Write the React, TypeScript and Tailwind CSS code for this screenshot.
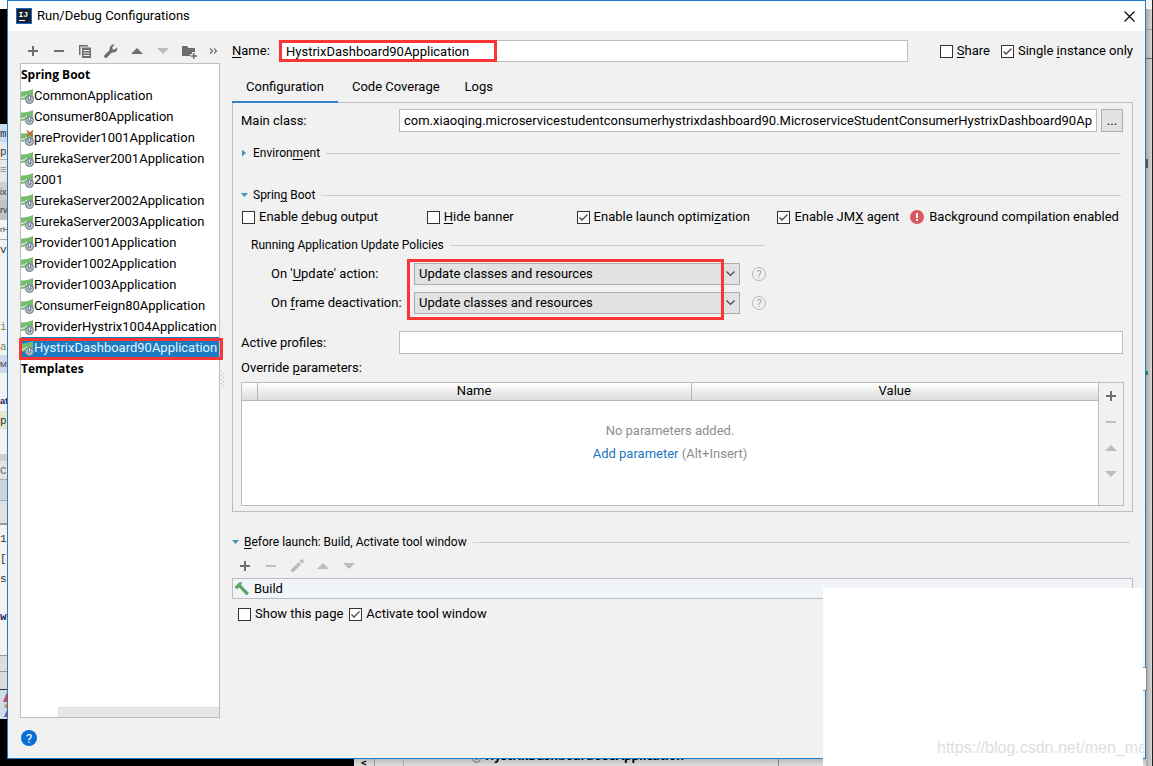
import React from "react";
import clsx from "clsx";

const apps = [
  { name: "CommonApplication" },
  { name: "Consumer80Application" },
  { name: "preProvider1001Application", broken: true },
  { name: "EurekaServer2001Application" },
  { name: "2001" },
  { name: "EurekaServer2002Application" },
  { name: "EurekaServer2003Application" },
  { name: "Provider1001Application" },
  { name: "Provider1002Application" },
  { name: "Provider1003Application" },
  { name: "ConsumerFeign80Application" },
  { name: "ProviderHystrix1004Application" },
  { name: "HystrixDashboard90Application", selected: true },
];

const policies = [
  { id: "on-update", label: "On '_Update' action:" },
  { id: "on-frame", label: "On _frame deactivation:" },
];

// "_" marks the mnemonic: the letter after it is underlined
function Mnemonic({ text }: { text: string }) {
  const at = text.indexOf("_");
  if (at < 0) return <>{text}</>;
  return (
    <>
      {text.slice(0, at)}
      <span className="underline underline-offset-2">{text[at + 1]}</span>
      {text.slice(at + 2)}
    </>
  );
}

type IconName = "plus" | "minus" | "copy" | "wrench" | "up" | "down" | "folder" | "more" | "pencil";

function Glyph({ name }: { name: IconName }) {
  return (
    <svg viewBox="0 0 16 16" className="size-4" fill="currentColor" aria-hidden="true">
      {name === "plus" && <path d="M7 3h2v4h4v2H9v4H7V9H3V7h4z" />}
      {name === "minus" && <path d="M3 7h10v2H3z" />}
      {name === "copy" && (
        <path fillRule="evenodd" d="M2 2h9v1.500H3.500V12H2zM5 4.500h9V15H5zM6.500 7v1h6V7zm0 2.500v1h6v-1zm0 2.500v1h6v-1z" />
      )}
      {name === "wrench" && (
        <path d="M14.300 4.300 11.800 6.600 9.700 6.200 9.300 4.200 11.600 1.800A4 4 0 0 0 6.700 7L1.600 12a1.600 1.600 0 0 0 2.400 2.400L9.100 9.300A4 4 0 0 0 14.300 4.300z" />
      )}
      {name === "up" && <path d="M2 11 8 5l6 6z" />}
      {name === "down" && <path d="M2 5h12L8 11z" />}
      {name === "folder" && (
        <path d="M1 3h5l1.500 2H14v4h-3v2H9v2H1zM12 10h1.500v2.200H16v1.500h-2.500V16H12v-2.300H9.700v-1.500H12z" />
      )}
      {name === "more" && (
        <path d="m3 5.500 2.500 2.500L3 10.500M7 5.500l2.500 2.500L7 10.500" fill="none" stroke="currentColor" strokeWidth="1.200" />
      )}
      {name === "pencil" && (
        <path d="m2 11.500 7.500-7.500 2.600 2.600L4.600 14H2zM10.500 3l1.600-1.600a1 1 0 0 1 1.300 0l1.300 1.300a1 1 0 0 1 0 1.300L13.100 5.600z" />
      )}
    </svg>
  );
}

function IconButton({ name, label, disabled }: { name: IconName; label: string; disabled?: boolean }) {
  return (
    <button
      type="button"
      aria-label={label}
      disabled={disabled}
      className={clsx(
        "flex h-5 w-[26px] shrink-0 items-center justify-center",
        disabled ? "text-[#bcbcbc]" : "text-[#6e6e6e]"
      )}
    >
      <Glyph name={name} />
    </button>
  );
}

function Check({ text, checked }: { text: string; checked?: boolean }) {
  return (
    <label className="flex items-center gap-1 whitespace-nowrap">
      <span className="grid place-items-center">
        <input
          type="checkbox"
          defaultChecked={checked}
          className="peer col-start-1 row-start-1 size-[13px] appearance-none border border-[#333] bg-white"
        />
        <svg
          viewBox="0 0 13 13"
          className="pointer-events-none invisible col-start-1 row-start-1 size-[13px] peer-checked:visible"
          aria-hidden="true"
        >
          <path d="M2.500 6.500 5 9l5.500-5.500" fill="none" stroke="#444" strokeWidth="1.300" />
        </svg>
      </span>
      <span>
        <Mnemonic text={text} />
      </span>
    </label>
  );
}

function Section({ text, open, plain }: { text: string; open?: boolean; plain?: boolean }) {
  return (
    <div className="flex h-5 items-center text-xs">
      {!plain && (
        <svg viewBox="0 0 8 8" className="mr-1 size-2" fill="#4393bf" aria-hidden="true">
          {open ? <path d="M0 2h7L3.500 6z" /> : <path d="M1 0.500 5 4 1 7.500z" />}
        </svg>
      )}
      <span className="whitespace-nowrap">
        <Mnemonic text={text} />
      </span>
      <span className="ml-1.5 h-px flex-1 bg-[#cdcdcd]" />
    </div>
  );
}

function SpringIcon({ broken }: { broken?: boolean }) {
  return (
    <svg viewBox="0 0 13 18" className="h-[18px] w-[13px] shrink-0" aria-hidden="true">
      <path d="M0 4.500C4 4.500 8 4 12 2v8L6 12 0 13z" fill="#74bd6c" />
      <path d="M0 10.500Q4 10.500 6 8" fill="none" stroke="#fff" strokeWidth="1" />
      <circle cx="8.500" cy="12.500" r="4.500" fill="#7f8e9b" />
      <path d="M6.700 10.700a2.600 2.600 0 1 0 3.600 0M8.500 9.500v3" fill="none" stroke="#dfe5ea" strokeWidth="1" />
      {broken && <path d="m6 1.500 6 6m0-6-6 6" stroke="#d9583f" strokeWidth="1.500" />}
    </svg>
  );
}

function GroupTitle({ text }: { text: string }) {
  return <div className="h-[21px] font-['Open_Sans',sans-serif] text-xs leading-[21px] font-bold">{text}</div>;
}

function Sidebar() {
  return (
    <aside className="flex w-[200px] shrink-0 flex-col">
      <div className="flex h-[23px] items-center pb-px">
        <IconButton name="plus" label="Add" />
        <IconButton name="minus" label="Remove" />
        <IconButton name="copy" label="Copy" />
        <IconButton name="wrench" label="Edit defaults" />
        <IconButton name="up" label="Move up" />
        <IconButton name="down" label="Move down" disabled />
        <IconButton name="folder" label="New folder" />
        <IconButton name="more" label="More" />
      </div>
      <div className="flex flex-1 flex-col border border-[#bdbdbd] bg-white">
        <GroupTitle text="Spring Boot" />
        <ul>
          {apps.map((app) => (
            <li
              key={app.name}
              className={clsx(
                "relative flex h-[21px] items-center whitespace-nowrap",
                app.selected && "bg-[#1a7dc4] text-[#e6f1fa]"
              )}
            >
              <SpringIcon broken={app.broken} />
              {app.name}
              {app.selected && <span className="absolute top-px -right-1 -bottom-0.5 -left-0.5 border-3 border-[#fb3535]" />}
            </li>
          ))}
        </ul>
        <GroupTitle text="Templates" />
        <div className="mt-auto ml-[37px] h-2.5 border border-b-0 border-[#dedede] bg-[#e7e7e7]" />
      </div>
    </aside>
  );
}

function Policies() {
  return (
    <div className="relative mt-2 flex flex-col gap-[7px] pl-[30px]">
      {policies.map((p) => (
        <div key={p.id} className="flex h-[22px] items-center">
          <label htmlFor={p.id} className="w-[143px] shrink-0 whitespace-nowrap">
            <Mnemonic text={p.label} />
          </label>
          <div className="grid h-full w-[326px] items-center">
            <select
              id={p.id}
              className="col-start-1 row-start-1 h-[22px] w-full appearance-none border border-[#adadad] bg-[#e2e2e2] pl-1 leading-5"
            >
              <option>Update classes and resources</option>
            </select>
            <svg viewBox="0 0 9 6" className="pointer-events-none col-start-1 row-start-1 mr-[5px] h-1.5 w-[9px] justify-self-end" aria-hidden="true">
              <path d="m0.500 0.500 4 4 4-4" fill="none" stroke="#444" strokeWidth="1.200" />
            </svg>
          </div>
          <button
            type="button"
            aria-label="Help"
            className="ml-3 flex size-3.5 items-center justify-center rounded-full border border-[#b5babd] text-[11px] leading-none text-[#a0a5a8]"
          >
            ?
          </button>
        </div>
      ))}
      <span className="pointer-events-none absolute -top-1 -bottom-1.5 left-[166px] w-[317px] border-3 border-[#fb3535]" />
    </div>
  );
}

function ParametersTable() {
  return (
    <div className="mt-1 -mr-px flex h-[124px] border border-[#bdbdbd]">
      <table className="h-full flex-1 table-fixed border-collapse bg-white">
        <thead>
          <tr className="h-[17px] bg-linear-to-b from-white to-[#dcdcdc] leading-4">
            <th className="w-[15px] border-r border-b border-[#b5b5b5] p-0" aria-label="Row" />
            <th className="w-[434px] border-r border-b border-[#b5b5b5] p-0 font-normal">Name</th>
            <th className="border-b border-[#b5b5b5] p-0 font-normal">Value</th>
          </tr>
        </thead>
        <tbody>
          <tr>
            <td colSpan={3} className="p-0 pt-[18px] text-center align-top leading-[23px] text-[#8e8e8e]">
              <p>No parameters added.</p>
              <p>
                <a href="#add" className="text-[#1a76c4]">
                  Add parameter
                </a>{" "}
                (Alt+Insert)
              </p>
            </td>
          </tr>
        </tbody>
      </table>
      <div className="flex w-[25px] flex-col items-center gap-1.5 border-l border-[#bdbdbd] pt-[3px]">
        <IconButton name="plus" label="Add parameter" />
        <IconButton name="minus" label="Remove parameter" disabled />
        <IconButton name="up" label="Move parameter up" disabled />
        <IconButton name="down" label="Move parameter down" disabled />
      </div>
    </div>
  );
}

function ConfigurationPanel() {
  return (
    <div className="border border-[#bdbdbd] pt-1.5 pr-[9px] pb-[5px] pl-2">
      <div className="flex h-[23px] items-center">
        <label htmlFor="main-class" className="w-[158px] shrink-0">
          Main class:
        </label>
        <input
          id="main-class"
          defaultValue="com.xiaoqing.microservicestudentconsumerhystrixdashboard90.MicroserviceStudentConsumerHystrixDashboard90Application"
          className="h-full min-w-0 flex-1 border border-[#bdbdbd] bg-white px-1"
        />
        <button type="button" aria-label="Browse" className="ml-1 h-full w-[22px] border border-[#adadad] bg-[#e2e2e2] leading-none">
          ...
        </button>
      </div>
      <div className="mt-[11px] pr-0.5">
        <Section text="Environ_ment" />
      </div>
      <div className="mt-[22px] pr-0.5">
        <Section text="Sprin_g Boot" open />
      </div>
      <div className="mt-0.5 grid h-5 grid-cols-[185fr_150fr_201fr_133fr_213fr] items-center pl-px">
        <Check text="Enable _debug output" />
        <Check text="_Hide banner" />
        <Check text="Enable launch optimi_zation" checked />
        <Check text="Enable JM_X agent" checked />
        <span className="flex items-center gap-[5px] whitespace-nowrap">
          <svg viewBox="0 0 14 14" className="size-3.5" aria-hidden="true">
            <circle cx="7" cy="7" r="7" fill="#db5860" />
            <path d="M6 3h2v5H6zM6 9h2v2H6z" fill="#fff" />
          </svg>
          Background compilation enabled
        </span>
      </div>
      <div className="mt-2 w-[524px] pl-2.5">
        <Section text="Running Application Update Policies" plain />
      </div>
      <Policies />
      <div className="mt-[17px] flex h-[23px] items-center">
        <label htmlFor="profiles" className="w-[158px] shrink-0">
          Active profiles:
        </label>
        <input id="profiles" className="h-full min-w-0 flex-1 border border-[#bdbdbd] bg-white px-1" />
      </div>
      <div className="mt-1 h-5 leading-5">
        <Mnemonic text="Override _parameters:" />
      </div>
      <ParametersTable />
    </div>
  );
}

function Editor() {
  return (
    <main className="flex min-w-0 flex-1 flex-col">
      <div className="flex h-[22px] items-center">
        <label htmlFor="name" className="w-12 shrink-0">
          <Mnemonic text="_Name:" />
        </label>
        <div className="relative h-full flex-1">
          <input
            id="name"
            defaultValue="HystrixDashboard90Application"
            className="h-full w-full border border-[#bdbdbd] bg-white px-[5px]"
          />
          <span className="pointer-events-none absolute inset-y-0 -left-px w-[218px] border-3 border-[#fb3535]" />
        </div>
        <div className="ml-8 flex gap-[11px]">
          <Check text="_Share" />
          <Check text="Single _instance only" checked />
        </div>
      </div>
      <div role="tablist" className="z-10 mt-[9px] -mb-px flex h-8">
        <button type="button" role="tab" aria-selected="true" className="border-b-2 border-[#3880c8] px-3.5 pt-0.5">
          Configuration
        </button>
        <button type="button" role="tab" aria-selected="false" className="px-3.5">
          Code Coverage
        </button>
        <button type="button" role="tab" aria-selected="false" className="px-[11px]">
          Logs
        </button>
      </div>
      <ConfigurationPanel />
      <div className="mt-5 pr-[3px]">
        <Section text="_Before launch: Build, Activate tool window" open />
      </div>
      <div className="mt-1 flex">
        <IconButton name="plus" label="Add task" />
        <IconButton name="minus" label="Remove task" disabled />
        <IconButton name="pencil" label="Edit task" disabled />
        <IconButton name="up" label="Move task up" disabled />
        <IconButton name="down" label="Move task down" disabled />
      </div>
      <div className="mt-0.5 flex h-[21px] items-center gap-1 border border-[#bdbdbd] bg-[#f1f5fa] pl-px">
        <svg viewBox="0 0 16 16" className="size-4" fill="#59a869" aria-hidden="true">
          <path d="M0.500 6 5 1.500 8.500 1 7 3.500l1.500 2 6.500 6.500-2.500 2.500L6.500 8 5 6.500 3 8.500z" />
        </svg>
        Build
      </div>
      <div className="mt-[5px] flex h-5 items-center gap-1.5 pl-1.5">
        <Check text="Show this page" />
        <Check text="Activate tool window" checked />
      </div>
    </main>
  );
}

// slivers of the IDE windows that stay visible around the dialog
function LeftEdge() {
  return (
    <div className="flex w-[7px] shrink-0 flex-col overflow-hidden bg-black font-['Liberation_Mono',monospace] text-[11px] leading-5 text-[#333]">
      <div className="h-[9px] bg-white" />
      <div className="mt-[115px] h-[18px] bg-[#c9dcee]">m</div>
      <div className="h-[18px] border-b border-[#aaa] bg-[#e9e9e9]">p</div>
      <div className="h-[22px] bg-[#e9e9e9] text-[#888]">≡</div>
      <div className="h-[18px] bg-[#cfcfcf] font-['Liberation_Sans',sans-serif] text-[9px]">ix</div>
      <div className="h-[20px] bg-[#c2c2c2] font-['Liberation_Sans',sans-serif] text-[9px]">rv</div>
      <div className="h-[20px] border-b border-[#aaa] bg-[#f4f4f4] font-['Liberation_Sans',sans-serif] text-[8px]">rH</div>
      <div className="h-[77px] bg-[#f2f2f2]">v</div>
      <div className="h-5 bg-[#f2f2f2] text-[#85803a]">i</div>
      <div className="h-[18px] bg-[#f2f2f2] text-[#85803a]">a</div>
      <div className="h-[18px] bg-[#d5d5ea] font-['Liberation_Sans',sans-serif] text-[8px]">Mi</div>
      <div className="h-[38px] bg-[#f2f2f2] pt-[18px] font-['Liberation_Sans',sans-serif] text-[9px] font-bold text-[#20205c]">at</div>
      <div className="h-[18px] bg-[#ebe4c6]">p</div>
      <div className="h-[25px] bg-[#f2f2f2]" />
      <div className="h-[7px] bg-[#cfcfcf]" />
      <div className="h-[19px] border-b border-[#aaa] bg-[#e4e4e4] text-[#666]">C</div>
      <div className="h-[21px] border-b border-[#aaa] bg-[#ccd3da]" />
      <div className="h-[24px] border-b-2 border-[#999] bg-[#e0e0e0]" />
      <div className="h-[130px] bg-[#f2f2f2] pt-1">
        <div>1</div>
        <div>[</div>
        <div>s</div>
        <div className="pt-[18px] font-bold text-[#20205c]">w</div>
      </div>
      <div className="h-[17px] border-y border-[#999] bg-[#ddd]" />
      <div className="h-[18px] border-b border-[#333] bg-[#ddd]" />
      <div className="h-[29px] bg-[#cfdcec]">
        <svg viewBox="0 0 7 29" className="h-full w-full" aria-hidden="true">
          <path d="M7 2v10H3z" fill="#d8434e" />
          <path d="m4 16 3-3v6z" fill="#d98a35" />
          <path d="M7 20v7H4z" fill="#8a4d9e" />
        </svg>
      </div>
    </div>
  );
}

function BottomEdge() {
  return (
    <div className="flex h-[7px] overflow-hidden bg-linear-to-b from-[#bdbdbd] to-[#dedede] text-black">
      <div className="w-[347px] bg-black" />
      <div className="flex w-[21px] items-center justify-center border-r border-[#999] text-xs">≤</div>
      <div className="w-[29px] border-r border-[#aaa]" />
      <div className="flex w-[375px] items-end gap-1 border-r border-[#888] pb-0.5 pl-[64px] font-['Open_Sans',sans-serif] text-xs leading-4 font-bold">
        <SpringIcon />
        HystrixDashboardUseApplication
      </div>
    </div>
  );
}

function RightEdge() {
  return (
    <div className="flex w-[7px] shrink-0 flex-col border-r border-[#222] bg-linear-to-r from-[#a9a9a9] to-[#d6d6d6]">
      <div className="h-[9px] bg-[#f4f4f4]" />
      <div className="h-[21px] border-b border-[#999]" />
      <div className="h-[29px] border-b border-[#666]" />
      <div className="mt-[100px] h-[9px] w-0.5 bg-[#555]" />
      <div className="mt-[203px] h-1 w-0.5 bg-[#1f8a2b]" />
    </div>
  );
}

export default function App() {
  return (
    <div className="relative flex min-h-screen overflow-hidden bg-black font-['Roboto',sans-serif] text-[13px] text-black">
      <LeftEdge />
      <div className="flex min-w-0 flex-1 flex-col">
        <div className="flex flex-1 flex-col border border-[#1a7fd0] bg-[#f1f1f1]">
          <header className="flex h-[30px] items-center bg-white px-2">
            <svg viewBox="0 0 16 16" className="size-4" aria-hidden="true">
              <rect x="0.500" y="0.500" width="15" height="15" fill="#17202c" stroke="#1668c9" />
              <text x="2.500" y="8.500" fontSize="8" fontWeight="bold" fill="#fff" fontFamily="Liberation Mono, monospace">
                IJ
              </text>
              <path d="M3 12h6v1H3z" fill="#fff" />
            </svg>
            <h1 className="ml-[5px]">Run/Debug Configurations</h1>
            <button type="button" aria-label="Close" className="ml-auto flex size-4 items-center justify-center">
              <svg viewBox="0 0 11 11" className="size-[11px]" aria-hidden="true">
                <path d="m0.500 0.500 10 10m0-10-10 10" stroke="#000" strokeWidth="1.100" />
              </svg>
            </button>
          </header>
          <div className="flex flex-1 pt-[9px] pr-3 pl-3">
            <Sidebar />
            <div className="flex w-3 shrink-0 items-center pl-px">
              <svg viewBox="0 0 4 16" className="h-4 w-1" fill="#b8b8b8" aria-hidden="true">
                <path d="M0 0h1v1H0zM2 2h1v1H2zM0 4h1v1H0zM2 6h1v1H2zM0 8h1v1H0zM2 10h1v1H2zM0 12h1v1H0zM2 14h1v1H2z" />
              </svg>
            </div>
            <Editor />
          </div>
          <footer className="flex h-10 items-center px-[13px]">
            <button
              type="button"
              aria-label="Help"
              className="flex size-4 items-center justify-center rounded-full bg-[#0a6fd2] text-[13px] leading-none text-white"
            >
              ?
            </button>
          </footer>
        </div>
        <BottomEdge />
      </div>
      <RightEdge />
      <div className="absolute right-1.5 bottom-[75px] h-6 w-2 border border-[#888] bg-white" />
      <div className="absolute right-2.5 bottom-0 flex h-[178px] w-80 items-end overflow-hidden bg-white pb-2 pl-[114px] font-['Liberation_Sans',Arial,sans-serif] text-base leading-5 whitespace-nowrap text-[#dedede]">
        https://blog.csdn.net/men_ma
      </div>
    </div>
  );
}
